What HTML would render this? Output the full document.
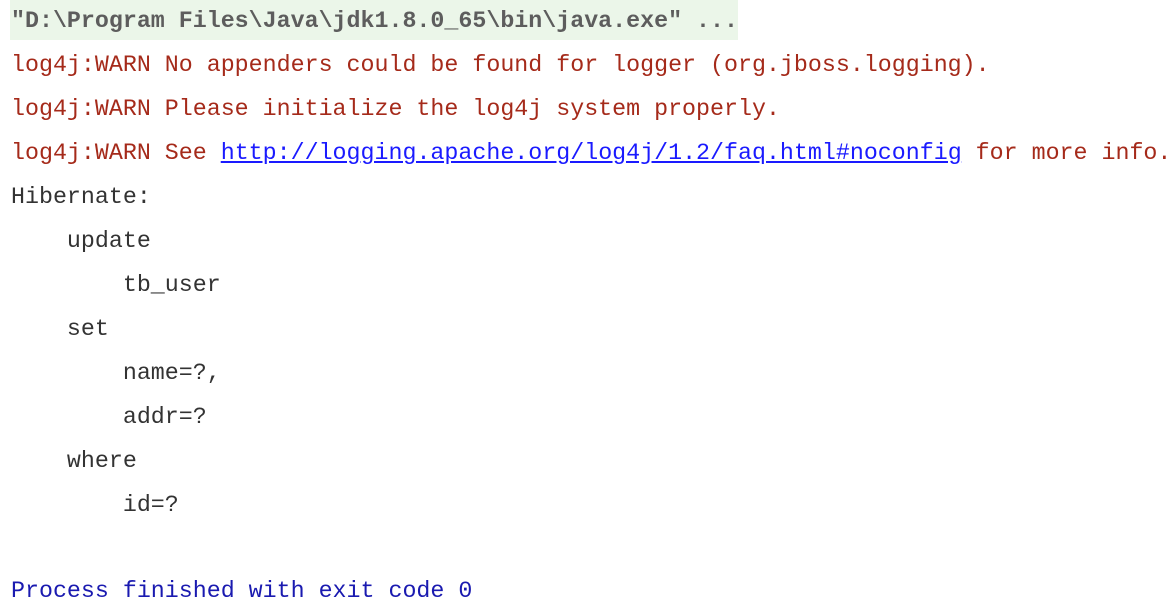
<!DOCTYPE html>
<html><head><style>
html,body{margin:0;padding:0;background:#fff;width:1175px;height:606px;overflow:hidden}
.l{position:absolute;left:11px;font-family:"Liberation Mono",monospace;font-size:23.3px;line-height:44px;white-space:pre;color:#333}
.r{color:#a52a1a}
.b{color:#1a1ab0}
a{color:#1a1aff;text-decoration:underline}
.hd{position:absolute;left:10px;top:0;width:728px;height:40px;background:#ebf6e9}
</style></head><body>
<div class="hd"></div>
<div class="l" style="top:-1px;font-weight:bold;color:#5d5d5d">"D:\Program Files\Java\jdk1.8.0_65\bin\java.exe" ...</div>
<div class="l r" style="top:43px">log4j:WARN No appenders could be found for logger (org.jboss.logging).</div>
<div class="l r" style="top:87px">log4j:WARN Please initialize the log4j system properly.</div>
<div class="l r" style="top:131px">log4j:WARN See <a>http://logging.apache.org/log4j/1.2/faq.html#noconfig</a> for more info.</div>
<div class="l" style="top:175px">Hibernate:</div>
<div class="l" style="top:219px">    update</div>
<div class="l" style="top:263px">        tb_user</div>
<div class="l" style="top:307px">    set</div>
<div class="l" style="top:351px">        name=?,</div>
<div class="l" style="top:395px">        addr=?</div>
<div class="l" style="top:439px">    where</div>
<div class="l" style="top:483px">        id=?</div>
<div class="l b" style="top:569px">Process finished with exit code 0</div>
</body></html>
